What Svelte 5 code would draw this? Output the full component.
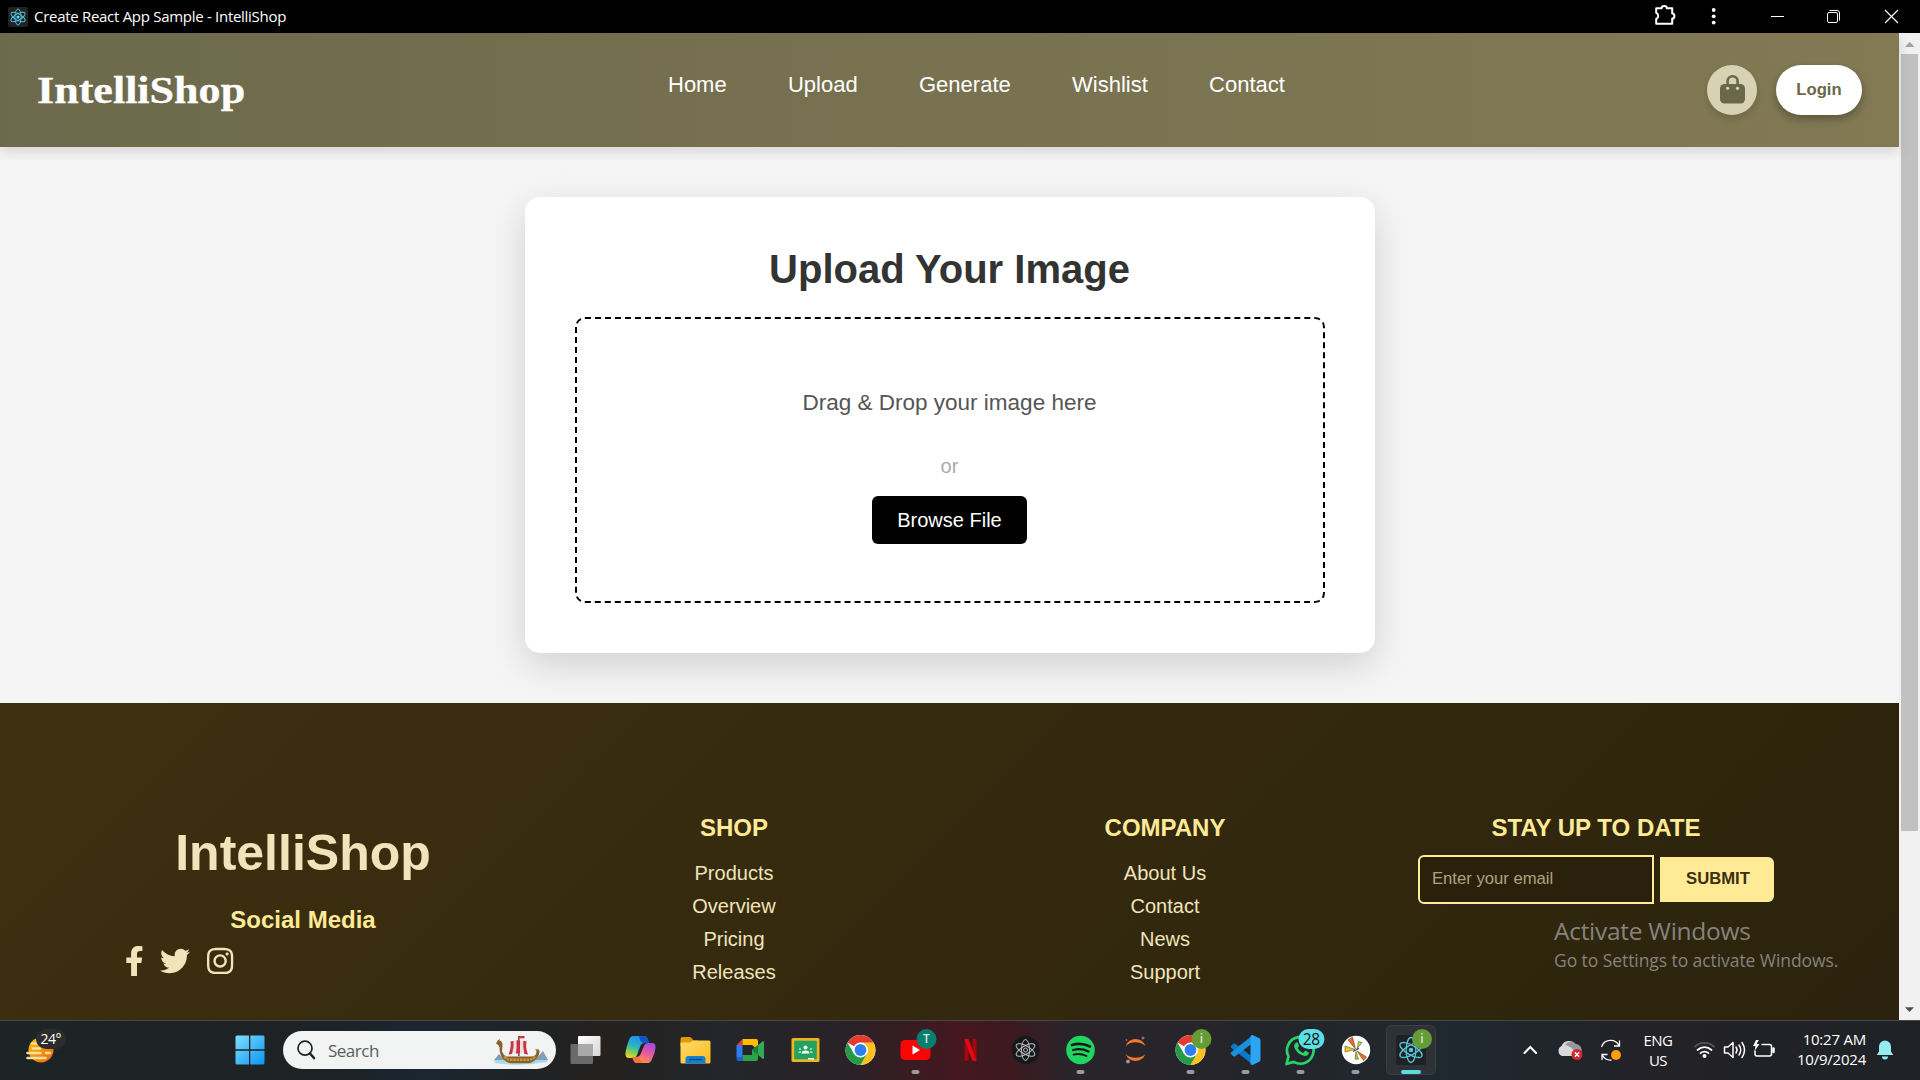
<script>
  const nav = ['Home', 'Upload', 'Generate', 'Wishlist', 'Contact'];
  const columns = [
    { title: 'SHOP', items: ['Products', 'Overview', 'Pricing', 'Releases'] },
    { title: 'COMPANY', items: ['About Us', 'Contact', 'News', 'Support'] }
  ];
</script>

{#snippet atom(cx, cy, rx, ry, stroke, w)}
  <g fill="none" {stroke} stroke-width={w}>
    {#each [30, 90, 150] as angle}
      <ellipse {cx} {cy} {rx} {ry} transform="rotate({angle} {cx} {cy})" />
    {/each}
  </g>
{/snippet}

{#snippet chrome()}
  <circle cx="27.5" cy="30" r="15" fill="#fff" />
  <path d="M27.5 30 L14.51 22.5 A15 15 0 0 1 40.49 22.5 Z" fill="#e33b2e" />
  <path d="M27.5 22.5 H40.49 A15 15 0 0 1 27.5 45 L34 33.75 Z" fill="#fcc31e" />
  <path d="M14.51 22.5 A15 15 0 0 0 27.5 45 L34 33.75 L27.5 30 L21 33.75 Z" fill="#259b48" />
  <circle cx="27.5" cy="30" r="7.5" fill="#fff" />
  <circle cx="27.5" cy="30" r="5.9" fill="#2d7ff0" />
{/snippet}

{#snippet badge(letter, color)}
  <circle cx="38.5" cy="19" r="10" fill={color} />
  <text class="badge" x="38.5" y="23.2" text-anchor="middle" fill="#d8e8d5">{letter}</text>
{/snippet}

{#snippet running()}
  <rect x="23.5" y="50" width="8" height="4" rx="2" fill="#9b9b9d" />
{/snippet}

<div class="screen">
  <div class="titlebar">
    <svg class="favicon" width="16" height="20" viewBox="0 0 16 20">
      <rect x="-2" width="20" height="20" rx="2" fill="#222" />
      {@render atom(8, 10, 8, 3.1, '#4fc0dc', 1)}
      <circle cx="8" cy="10" r="1.6" fill="#61dafb" />
    </svg>
    <span class="apptitle">Create React App Sample - IntelliShop</span>
    <svg class="controls" width="270" height="33" viewBox="0 0 270 33" fill="none" stroke="#fff">
      <path d="M6.2 8.2H11.6a2.6 2.2 0 0 1 5.2 0H22.2V13.4a2.2 2.6 0 0 1 0 5.200V23.800H6.200V19a3.400 3.400 0 0 0 0-6.200Z" stroke-width="2" stroke-linejoin="round" />
      <g fill="#fff" stroke="none"><circle cx="63.7" cy="10" r="1.9" /><circle cx="63.7" cy="16.3" r="1.9" /><circle cx="63.7" cy="22.6" r="1.9" /></g>
      <path d="M121 16.5h13" />
      <rect x="177.5" y="12.5" width="10" height="10" rx="1.5" />
      <path d="M179.5 10.5h7.5a2.500 2.500 0 0 1 2.500 2.500v7.500" />
      <path d="M235 10l13 13M248 10l-13 13" stroke-width="1.2" />
    </svg>
  </div>

  <div class="browser">
    <div class="page">
      <header>
        <span class="logo">IntelliShop</span>
        <nav>
          {#each nav as item}<a href="#top">{item}</a>{/each}
        </nav>
        <div class="actions">
          <button class="bag" aria-label="Bag">
            <svg width="26" height="30" viewBox="0 0 26 30">
              <path d="M8.600 12V6.300a5 5 0 0 1 10 0V12" fill="none" stroke="#6b6849" stroke-width="2.600" />
              <rect x="1" y="9" width="25" height="19.500" rx="4.500" fill="#6b6849" />
              <circle cx="8.600" cy="13.300" r="1.600" fill="#d8d2b4" /><circle cx="18.500" cy="13.300" r="1.600" fill="#d8d2b4" />
            </svg>
          </button>
          <button class="login">Login</button>
        </div>
      </header>

      <main>
        <section class="card">
          <h1>Upload Your Image</h1>
          <div class="drop">
            <p class="drag">Drag &amp; Drop your image here</p>
            <p class="or">or</p>
            <button class="browse">Browse File</button>
          </div>
        </section>
      </main>

      <footer>
        <div class="col brand">
          <h2>IntelliShop</h2>
          <h3>Social Media</h3>
          <div class="social">
            <svg width="18.750" height="30" viewBox="0 0 320 512"><path d="M279.140 288l14.220-92.660h-88.910v-60.130c0-25.350 12.420-50.060 52.240-50.060h40.420V6.260S260.430 0 225.360 0c-73.220 0-121.080 44.380-121.080 124.720v70.620H22.890V288h81.390v224h100.170V288z" /></svg>
            <svg width="30" height="30" viewBox="0 0 512 512"><path d="M459.370 151.716c.325 4.548.325 9.097.325 13.645 0 138.720-105.583 298.558-298.558 298.558-59.452 0-114.680-17.219-161.137-47.106 8.447.974 16.568 1.299 25.340 1.299 49.055 0 94.213-16.568 130.274-44.832-46.132-.975-84.792-31.188-98.112-72.772 6.498.974 12.995 1.624 19.818 1.624 9.421 0 18.843-1.300 27.614-3.573-48.081-9.747-84.143-51.980-84.143-102.985v-1.299c13.969 7.797 30.214 12.670 47.431 13.319-28.264-18.843-46.781-51.005-46.781-87.391 0-19.492 5.197-37.360 14.294-52.954 51.655 63.675 129.300 105.258 216.365 109.807-1.624-7.797-2.599-15.918-2.599-24.040 0-57.828 46.782-104.934 104.934-104.934 30.213 0 57.502 12.670 76.670 33.137 23.715-4.548 46.456-13.320 66.599-25.340-7.798 24.366-24.366 44.833-46.132 57.827 21.117-2.273 41.584-8.122 60.426-16.243-14.292 20.791-32.161 39.308-52.628 54.253z" /></svg>
            <svg width="26.250" height="30" viewBox="0 0 448 512"><path d="M224.100 141c-63.600 0-114.900 51.300-114.900 114.900s51.300 114.900 114.900 114.900S339 319.500 339 255.900 287.700 141 224.100 141zm0 189.600c-41.100 0-74.700-33.500-74.700-74.700s33.500-74.700 74.700-74.700 74.700 33.500 74.700 74.700-33.600 74.700-74.700 74.700zm146.400-194.300c0 14.900-12 26.800-26.800 26.800-14.900 0-26.800-12-26.800-26.800s12-26.800 26.800-26.800 26.800 12 26.800 26.800zm76.100 27.200c-1.700-35.900-9.900-67.700-36.200-93.900-26.200-26.200-58-34.400-93.900-36.200-37-2.100-147.900-2.100-184.900 0-35.800 1.700-67.600 9.900-93.900 36.100s-34.400 58-36.200 93.900c-2.100 37-2.100 147.900 0 184.900 1.700 35.900 9.900 67.700 36.200 93.900s58 34.400 93.900 36.200c37 2.100 147.900 2.100 184.900 0 35.900-1.700 67.700-9.900 93.900-36.200 26.200-26.200 34.400-58 36.200-93.900 2.100-37 2.100-147.800 0-184.800zM398.800 388c-7.800 19.600-22.900 34.700-42.600 42.600-29.500 11.700-99.500 9-132.100 9s-102.700 2.600-132.100-9c-19.600-7.800-34.700-22.900-42.600-42.600-11.700-29.500-9-99.500-9-132.100s-2.600-102.700 9-132.100c7.800-19.600 22.900-34.700 42.600-42.600 29.500-11.700 99.500-9 132.100-9s102.700-2.600 132.100 9c19.600 7.800 34.700 22.900 42.600 42.600 11.700 29.500 9 99.500 9 132.100s2.700 102.700-9 132.100z" /></svg>
          </div>
        </div>
        {#each columns as col}
          <div class="col links">
            <h3>{col.title}</h3>
            <ul>
              {#each col.items as item}<li>{item}</li>{/each}
            </ul>
          </div>
        {/each}
        <div class="col stay">
          <h3>STAY UP TO DATE</h3>
          <form>
            <input type="email" placeholder="Enter your email" />
            <button type="button">SUBMIT</button>
          </form>
        </div>
      </footer>
    </div>

    <div class="scrollbar">
      <svg width="21" height="21" viewBox="0 0 21 21"><path d="M6 14h9.500L10.700 8.800z" fill="#a3a3a3" /></svg>
      <div class="thumb"></div>
      <svg class="down" width="21" height="21" viewBox="0 0 21 21"><path d="M6 8.200h9L10.500 13z" fill="#505050" /></svg>
    </div>
  </div>

  <div class="taskbar">
    <svg class="weather" width="80" height="60" viewBox="0 0 80 60">
      <defs><linearGradient id="sun" x1="0" y1="0" x2="1" y2="1"><stop offset="0" stop-color="#ffc400" /><stop offset="1" stop-color="#ea6410" /></linearGradient></defs>
      <circle cx="41" cy="30" r="12.500" fill="url(#sun)" />
      <g stroke="#f6dfa0" stroke-width="2.600" stroke-linecap="round"><path d="M32 23.500h5M33 28.500h7M27.500 33h13M46 33h4M27.500 38h18" /></g>
      <rect x="36" y="9" width="30" height="20" rx="10" fill="#2c2c2c" />
      <text x="50.800" y="24" text-anchor="middle" class="temp" fill="#fff">24°</text>
    </svg>
    <svg class="start" width="30" height="30" viewBox="0 0 30 30">
      <defs><linearGradient id="win" x1="0" y1="0" x2="1" y2="1"><stop offset="0" stop-color="#7fe0fc" /><stop offset="1" stop-color="#0a94f5" /></linearGradient></defs>
      <path d="M2 .5H14V14.300H.5V2A1.500 1.500 0 0 1 2 .5ZM15.300.5H28A1.500 1.500 0 0 1 29.500 2V14.300H15.300ZM.5 15.700H14V29.500H2A1.500 1.500 0 0 1 .5 28ZM15.300 15.700H29.500V28A1.500 1.500 0 0 1 28 29.500H15.300Z" fill="url(#win)" />
    </svg>
    <div class="search">
      <svg width="20" height="20" viewBox="0 0 20 20" fill="none" stroke="#222" stroke-linecap="round"><circle cx="8" cy="8.200" r="7" stroke-width="1.700" /><path d="M13 13.500l4 4.500" stroke-width="2.600" /></svg>
      <span>Search</span>
      <svg class="ship" width="58" height="34" viewBox="0 0 58 34">
        <path d="M2 27l5-6 6 6zM43 27l8-9 5 9z" fill="#7f9fb2" />
        <path d="M2 27h54l-2 2q-24 5-51 1z" fill="#a9d8ef" />
        <path d="M4 10.500q1-3.500 4-4.500l-.5 1.500q3 .8 3 4.500-.2 3-.5 6 1 4 4.500 5.500H40q4-.5 4.500-4.500.3-2-1.800-2.500 3.500-1 4.600 1 .8 3-1.500 6.500-3 5-9 6.300H19q-6-.8-9.500-6.800-2.500-5-1.800-9-.4-2.500-3.700-4Z" fill="#87602f" />
        <path d="M12.500 23.500q2 3 6 3.200h18q5-.3 7-4" fill="none" stroke="#c99a2e" stroke-width="2.400" stroke-dasharray="2.500 .8" />
        <path d="M26.800 3v20" stroke="#6f4a20" stroke-width="1.500" />
        <path d="M18.500 8.500q8-2 16 0-1.200 6 1.500 13-9-2.300-19.500 0 3-7 2-13Z" fill="#eedfdc" />
        <path d="M18.500 8.500l3-.6q.8 6-1.500 13l-3.500.6q3-7 2-13ZM24.500 7.300h3.500v13.200h-4q1-6.500.5-13.200ZM31.300 7.800l3.200.7q-1.200 6 1.500 13l-3.600-.6q-1.600-7-1.100-13.100Z" fill="#c83344" />
        <path d="M27 3h5.500v2.300H27Z" fill="#d4303f" />
      </svg>
    </div>

    <div class="apps">
      <svg class="slot" viewBox="0 0 55 60">
        <defs><linearGradient id="tv" x1="0" y1="0" x2="1" y2="1"><stop offset="0" stop-color="#fff" /><stop offset="1" stop-color="#d5d5d5" /></linearGradient></defs>
        <rect x="20" y="16" width="22.500" height="20" rx="1" fill="url(#tv)" />
        <rect x="12.500" y="24" width="22.500" height="20" rx="1" fill="#777" opacity=".85" />
        <rect x="20" y="24" width="15" height="12" fill="#a9a9a9" />
      </svg>
      <svg class="slot" viewBox="0 0 55 60">
        <defs>
          <linearGradient id="cp1" x1=".6" y1="0" x2=".2" y2="1"><stop offset="0" stop-color="#1490f0" /><stop offset=".5" stop-color="#2fb4c0" /><stop offset=".75" stop-color="#84d04a" /><stop offset="1" stop-color="#f6d02a" /></linearGradient>
          <linearGradient id="cp2" x1=".7" y1="0" x2=".3" y2="1"><stop offset="0" stop-color="#a24be0" /><stop offset=".5" stop-color="#ee5a98" /><stop offset="1" stop-color="#fb9a3c" /></linearGradient>
        </defs>
        <path d="M20 16h11q3 0 4 4l1 3h-4q-4 0-5 4l-3 8q-1 3-4 3h-4q-4 0-3.500-5 .5-5 3.500-13 1.500-4 4-4Z" fill="url(#cp1)" />
        <path d="M31 16q3 0 4 4l1 3h-5q-4 0-5-7Z" fill="#1552c4" />
        <path d="M35 43H24q-3 0-4-4l-1-2h4q4 0 5-4l3-7q1-3 4-3h4q4 0 3.500 5-.5 5-3.500 11-1.500 4-4 4Z" fill="url(#cp2)" />
        <path d="M24 43q-3 0-4-4l-1-2h4q3 0 5 4 1 2 3 2Z" fill="#f4733c" />
      </svg>
      <svg class="slot" viewBox="0 0 55 60">
        <defs><linearGradient id="fe" x1="0" y1="0" x2="1" y2="1"><stop offset="0" stop-color="#ffda68" /><stop offset="1" stop-color="#fbbb21" /></linearGradient></defs>
        <path d="M12.500 19q0-2 2-2h7q1.500 0 2.500 1.500l1.500 2H30V26H12.500Z" fill="#dd9a06" />
        <path d="M12.500 22.500H22l3-2h16q1.500 0 1.500 1.500v20q0 1.500-1.500 1.500H14q-1.500 0-1.500-1.500Z" fill="url(#fe)" />
        <path d="M17.500 43.500V39q0-3 3-3h14q3 0 3 3v4.500Z" fill="#1580d2" /><path d="M21 39.500h13" stroke="#0b4c8c" stroke-width="1.500" />
      </svg>
      <svg class="slot" viewBox="0 0 55 60">
        <path d="M13.500 25L19.500 19V25Z" fill="#e23b30" /><path d="M13.500 25h6v12h-6Z" fill="#2f7cf0" /><path d="M13.500 37h6v4h-4q-2 0-2-2Z" fill="#1c60cf" />
        <path d="M19.500 19H33q2 0 2 2v9l-6-5h-9.500Z" fill="#fbbc04" /><path d="M19.500 41V35H29V30l6-1v10q0 2-2 2Z" fill="#2ba24c" />
        <path d="M29 30l11-9q1 0 1 1v16q0 1-1 1Z" fill="#34a853" /><path d="M29 30l6-5v10Z" fill="#1b7e39" />
      </svg>
      <svg class="slot" viewBox="0 0 55 60">
        <rect x="13.500" y="18" width="28" height="24" rx="1.500" fill="#eeb51f" /><rect x="16.200" y="20.700" width="22.600" height="18.600" fill="#23a15f" />
        <circle cx="27.500" cy="27.500" r="2" fill="#fff" /><path d="M23.500 33.500q0-3 4-3t4 3Z" fill="#fff" />
        <path d="M20 33q0-2 3-2v2ZM35 33q0-2-3-2v2Z" fill="#97d3b2" /><circle cx="22" cy="29" r="1.200" fill="#97d3b2" /><circle cx="33" cy="29" r="1.200" fill="#97d3b2" /><rect x="30" y="38" width="6" height="1.500" fill="#fff" />
      </svg>
      <svg class="slot" viewBox="0 0 55 60">{@render chrome()}</svg>
      <svg class="slot" viewBox="0 0 55 60">
        <rect x="12.500" y="20" width="30" height="20" rx="4.500" fill="#f90505" /><path d="M24.500 25.500v9l7.500-4.500Z" fill="#fff" />
        {@render badge('T', '#067f72')}{@render running()}
      </svg>
      <svg class="slot" viewBox="0 0 55 60">
        <path d="M21.500 19h4v21.500l-4 .5ZM29.500 19h4v22l-4-.5Z" fill="#a8060f" /><path d="M21.500 19h4l8 22-4.300-.5Z" fill="#e50914" />
      </svg>
      <svg class="slot" viewBox="0 0 55 60">
        <circle cx="27.500" cy="30" r="14" fill="#17181a" />{@render atom(27.5, 30, 10.5, 4, '#b9bcbe', 1)}<circle cx="27.500" cy="30" r="2" fill="none" stroke="#b9bcbe" />
      </svg>
      <svg class="slot" viewBox="0 0 55 60">
        <circle cx="27.500" cy="30" r="14.300" fill="#1fd760" />
        <g fill="none" stroke="#151c18" stroke-linecap="round"><path d="M19 25q9-2.800 18 1.500" stroke-width="2.700" /><path d="M20 30q8-2.300 15.500 1.500" stroke-width="2.200" /><path d="M20.500 34.600q7-1.800 13 1.400" stroke-width="1.900" /></g>
        {@render running()}
      </svg>
      <svg class="slot" viewBox="0 0 55 60">
        <path d="M17.500 26q3-7 10-7t10 7q-4-3.800-10-3.800T17.500 26ZM17.500 34q3 7 10 7t10-7q-4 3.800-10 3.800T17.500 34Z" fill="#f37726" />
        <circle cx="35" cy="18" r="1.500" fill="#777" /><circle cx="18.500" cy="20" r=".9" fill="#777" /><circle cx="20" cy="41.500" r="1.900" fill="#999" />
      </svg>
      <svg class="slot" viewBox="0 0 55 60">{@render chrome()}{@render badge('i', '#659c35')}{@render running()}</svg>
      <svg class="slot" viewBox="0 0 55 60">
        <path d="M13 26l2.300-2.200q1-.7 2 0L35 37.300V45L13.200 27.800q-1-.9-.2-1.800Z" fill="#0c77c4" />
        <path d="M13 34l2.300 2.200q1 .7 2 0L35 22.700V15L13.200 32.200q-1 .9-.2 1.800Z" fill="#1b8fdc" />
        <path d="M34.500 15l6.700 3.200q1.300.7 1.300 2v19.600q0 1.300-1.300 2L34.500 45q-1.500 0-2-1.200V16.200q.5-1.200 2-1.200Z" fill="#2ba4f3" />
        {@render running()}
      </svg>
      <svg class="slot" viewBox="0 0 55 60">
        <path d="M13.500 44l2-7.500a13.300 13.300 0 1 1 5.200 5.400Z" fill="none" stroke="#27d465" stroke-width="2.700" stroke-linejoin="round" />
        <path d="M22.500 23q1.500-1.500 2.500.3l1 2.200q.3.900-1.300 2.400 2 3.800 5.300 5.200l1.700-1.900q.6-.6 1.500-.1l2.500 1.300q.8 1.200-.9 2.700-2.200 1.500-5 .4-6-2-8.500-8-1-2.700 1.200-4.500Z" fill="#27d465" />
        <rect x="25.500" y="9" width="26" height="20" rx="10" fill="#5cdfe5" /><text class="count" x="38.200" y="24.500" text-anchor="middle" fill="#111">28</text>
        {@render running()}
      </svg>
      <svg class="slot" viewBox="0 0 55 60">
        <circle cx="28" cy="30" r="14.200" fill="#fff" />
        <g stroke="#3a3a18" stroke-width=".5"><path d="M27.500 29l-7.500-9 4.500-3Z" fill="#ee6a22" /><path d="M27 29.500l-10-3.500v6Z" fill="#f4c61c" /><path d="M29 29l1.500-7.500 3.500 1Z" fill="#c4d83a" /><path d="M29 31l9.500 6-3 3.500Z" fill="#ee6a22" /><path d="M28 31.500l-1 7.500 3.500.2Z" fill="#a5d52e" /></g>
        <path d="M25 31.500l6-3" stroke="#222" stroke-width="1" />
        {@render running()}
      </svg>
      <svg class="slot" viewBox="0 0 55 60">
        <rect x="3.500" y="5.500" width="49" height="49" rx="5" fill="#2e3137" stroke="#3c3f44" />
        <rect x="13" y="15" width="30" height="30" rx="2.500" fill="#202123" />
        {@render atom(28, 30, 12.5, 4.8, '#58c4dc', 1.3)}<circle cx="28" cy="30" r="2.300" fill="#58c4dc" />
        <g transform="translate(.5)">{@render badge('i', '#659c35')}</g>
        <rect x="18" y="50" width="20" height="4" rx="2" fill="#5cdbe3" />
      </svg>
    </div>

    <div class="tray">
      <svg width="110" height="60" viewBox="0 0 110 60">
        <path d="M6.500 33l5.800-6 5.800 6" fill="none" stroke="#fff" stroke-width="2" stroke-linecap="round" />
        <g transform="translate(-2 0)"><path d="M46 36a5.500 5.500 0 0 1-.5-10 8 8 0 0 1 14-1.500A5.500 5.500 0 0 1 60 36Z" fill="#d9d9db" /><path d="M49 25a7 7 0 0 1 11-1 6 6 0 0 1 5 8l-6 0q-4-6-10-7Z" fill="#96979a" />
        <circle cx="61" cy="34.500" r="5.500" fill="#d8242f" /><path d="M58.800 32.300l4.400 4.400M63.200 32.300l-4.400 4.400" stroke="#fff" stroke-width="1.500" /></g>
        <g transform="translate(-3.500 0)"><g fill="none" stroke="#fff" stroke-width="1.300"><path d="M87 27a9.500 9.500 0 0 1 17.500-1.500M105 20.500v5.500h-5.500M97 40a9.500 9.500 0 0 1-9-4.500M87.500 40v-5.500h5.500" /></g>
        <circle cx="101.500" cy="35" r="5" fill="#ff9c08" /></g>
      </svg>
      <div class="lang"><span>ENG</span><span>US</span></div>
      <svg class="status" width="90" height="60" viewBox="0 0 90 60">
        <g fill="none" stroke="#fff" stroke-width="1.800" stroke-linecap="round"><path d="M4 26.500a14 14 0 0 1 19 0" stroke="#55585c" /><path d="M6.500 30a10.200 10.200 0 0 1 14 0" /><path d="M9.500 33.200a5.800 5.800 0 0 1 8 0" /></g><circle cx="13.500" cy="36" r="2" fill="#fff" />
        <g fill="none" stroke="#fff" stroke-width="1.500" stroke-linejoin="round" stroke-linecap="round"><path d="M33.500 27h3.500l5-4.500v15L37 33h-3.500Z" /><path d="M45 27q2 3 0 6M48 25q3.500 5 0 10M51 22.500q5 7.500 0 15" />
        <path d="M71 24.500h7.500a2 2 0 0 1 2 2v7.500a2 2 0 0 1-2 2H66a2 2 0 0 1-2-2v-3" /><path d="M82.500 28.500v3.500" stroke-width="2.500" /></g>
        <path d="M65 20l-3 6h2.500l-1 5 5-7h-2.800l2-4Z" fill="#fff" />
      </svg>
      <div class="clock"><span>10:27 AM</span><span>10/9/2024</span></div>
      <svg class="bell" width="18" height="20" viewBox="0 0 18 20"><path d="M9 .5a6 6 0 0 1 6 6v5l2.300 3.500H.7L3 11.500v-5a6 6 0 0 1 6-6ZM6 16.500h6a3 3 0 0 1-6 0Z" fill="#93ecee" /></svg>
    </div>
  </div>

  <div class="watermark"><span class="big">Activate Windows</span><span class="small">Go to Settings to activate Windows.</span></div>
</div>

<style>
  :global(body) { margin: 0; background: #000; overflow: hidden; }
  .screen { width: 1920px; height: 1080px; position: relative; display: flex; flex-direction: column; overflow: hidden; font-family: "Liberation Sans", Arial, sans-serif; }
  .screen :is(h1, h2, h3, p, ul) { margin: 0; padding: 0; }
  button, input { font-family: inherit; border: 0; padding: 0; box-sizing: border-box; }
  svg { display: block; flex: none; }
  .titlebar { height: 33px; flex: none; display: flex; align-items: center; background: #000; padding-left: 8px; color: #fff; }
  .favicon { width: 20px; margin-right: 6px; overflow: visible; }
  .apptitle { font: 15px/20px "Open Sans", "Noto Sans", sans-serif; letter-spacing: -0.29px; white-space: nowrap; padding-bottom: 2px; }
  .controls { margin-left: auto; }

  .browser { height: 987px; flex: none; display: flex; overflow: hidden; }
  .page { width: 1899px; display: flex; flex-direction: column; background: #f5f5f5; }
  header { height: 114px; flex: none; box-sizing: border-box; display: grid; grid-template-columns: 631px 1fr auto; align-items: center; padding: 0 37px 0 37px; background: linear-gradient(90deg, #6d694c, #837a54); box-shadow: 0 5px 12px rgba(0, 0, 0, .13); position: relative; z-index: 1; }
  .logo { font: bold 37.5px/44px "Liberation Serif", serif; color: #fff; -webkit-text-stroke: .3px #fff; transform: scaleX(1.175); transform-origin: left; padding-top: 2px; }
  nav { display: flex; gap: 61.3px; padding-bottom: 10px; }
  nav a { color: #fff; text-decoration: none; font-size: 22px; line-height: 26px; }
  .actions { display: flex; gap: 19px; }
  .bag { width: 50px; height: 50px; border-radius: 50%; background: #d8d2b4; display: grid; place-items: center; box-shadow: 0 4px 8px rgba(0, 0, 0, .15); }
  .login { width: 86px; height: 50px; border-radius: 25px; background: #fff; color: #6b6849; font-size: 16.67px; font-weight: bold; box-shadow: 0 4px 10px rgba(0, 0, 0, .3); }

  main { height: 556px; flex: none; display: flex; justify-content: center; align-items: center; }
  .card { width: 850px; height: 456px; box-sizing: border-box; padding: 50px; border-radius: 15px; background: #fff; box-shadow: 0 12px 37px rgba(0, 0, 0, .15); text-align: center; }
  h1 { font-size: 40px; line-height: 44px; color: #333; }
  .drop { height: 286px; box-sizing: border-box; margin-top: 26px; border: 2px dashed #000; border-radius: 10px; padding-top: 70px; }
  .drag { font-size: 22.5px; line-height: 28px; color: #555; }
  .screen .or { font-size: 20px; line-height: 24px; color: #aaa; margin: 37px 0 18px; }
  .browse { width: 155px; height: 48px; border-radius: 6px; background: #000; color: #fff; font-size: 20px; display: block; margin: 0 auto; }

  footer { flex: 1; display: grid; grid-template-columns: repeat(4, 431px); justify-content: center; padding-top: 111px; background: linear-gradient(135deg, #3e3010, #2b230d); }
  .col { text-align: center; }
  .brand { padding-top: 11px; }
  h2 { font-size: 50px; line-height: 56px; color: #f0e4bb; }
  h3 { font-size: 24px; line-height: 28px; color: #ffea96; }
  .screen .brand h3 { margin-top: 25px; }
  .social { display: flex; gap: 17px; margin-top: 12px; padding-left: 37px; fill: #f0e4bb; }
  ul { list-style: none; }
  .screen .links ul { margin-top: 15px; }
  li { font-size: 20px; line-height: 33px; color: #f0e4bb; }
  form { display: flex; justify-content: center; align-items: center; gap: 6px; margin-top: 13px; }
  input { width: 236px; height: 49px; border: 2px solid #ffea96; border-radius: 6px 0 0 6px; background: #2a210d; color: #f0e4bb; font-size: 16.67px; padding: 0 12px 1px 12px; }
  input::placeholder { color: #aea37c; opacity: 1; }
  form button { width: 114px; height: 45px; background: #ffea96; color: #3b2f10; border-radius: 0 6px 6px 0; font-size: 16.67px; font-weight: bold; padding: 0 0 1px 2px; }

  .scrollbar { width: 21px; display: flex; flex-direction: column; background: #f1f1f1; }
  .thumb { width: 17px; height: 777px; margin-left: 2px; background: #c1c1c1; }
  .down { margin-top: auto; }

  .taskbar { height: 60px; flex: none; display: flex; align-items: center; background: linear-gradient(90deg, #1c2426 0, #1e2224 280px, #1b2630 430px, #24211f 600px, #23262a 720px, #2a2227 850px, #45171e 960px, #3c1a20 1010px, #29242a 1070px, #24252a 1250px, #1f2830 1460px, #232227 1650px, #1e2226 1920px); box-shadow: inset 0 1px #45494a; font-family: "Open Sans", "Noto Sans", sans-serif; color: #fff; }
  .temp { font: 14px "Open Sans", sans-serif; letter-spacing: -.5px; }
  .start { margin-left: 155px; }
  .search { width: 273px; height: 38px; margin-left: 18px; border-radius: 19px; background: #f2f3f3; display: flex; align-items: center; box-sizing: border-box; padding-left: 14px; color: #5d5d5d; }
  .search span { font-size: 17px; line-height: 24px; margin-left: 11px; letter-spacing: -.5px; padding-top: 1px; }
  .ship { margin-left: auto; margin-right: 6px; }
  .apps { display: flex; margin-left: 2px; }
  .slot { width: 55px; height: 60px; }
  .badge { font: 600 12px "Open Sans", sans-serif; }
  .count { font: 15.500px "Open Sans", sans-serif; letter-spacing: -.5px; }
  .tray { display: flex; align-items: center; margin-left: 80px; font-size: 15px; line-height: 20px; letter-spacing: -.5px; }
  .lang { width: 60px; display: flex; flex-direction: column; align-items: center; }
  .status { margin-left: 3px; }
  .clock { width: 85px; display: flex; flex-direction: column; align-items: flex-end; white-space: nowrap; letter-spacing: -.22px; padding-bottom: 2px; }
  .bell { margin-left: 10px; }

  .watermark { position: absolute; left: 1554px; top: 914px; display: flex; flex-direction: column; color: rgba(170, 170, 170, .72); font-family: "Open Sans", "Noto Sans", sans-serif; white-space: nowrap; }
  .big { font-size: 24.500px; line-height: 34px; letter-spacing: -.28px; }
  .small { font-size: 17.500px; line-height: 24px; letter-spacing: -.07px; }
</style>
